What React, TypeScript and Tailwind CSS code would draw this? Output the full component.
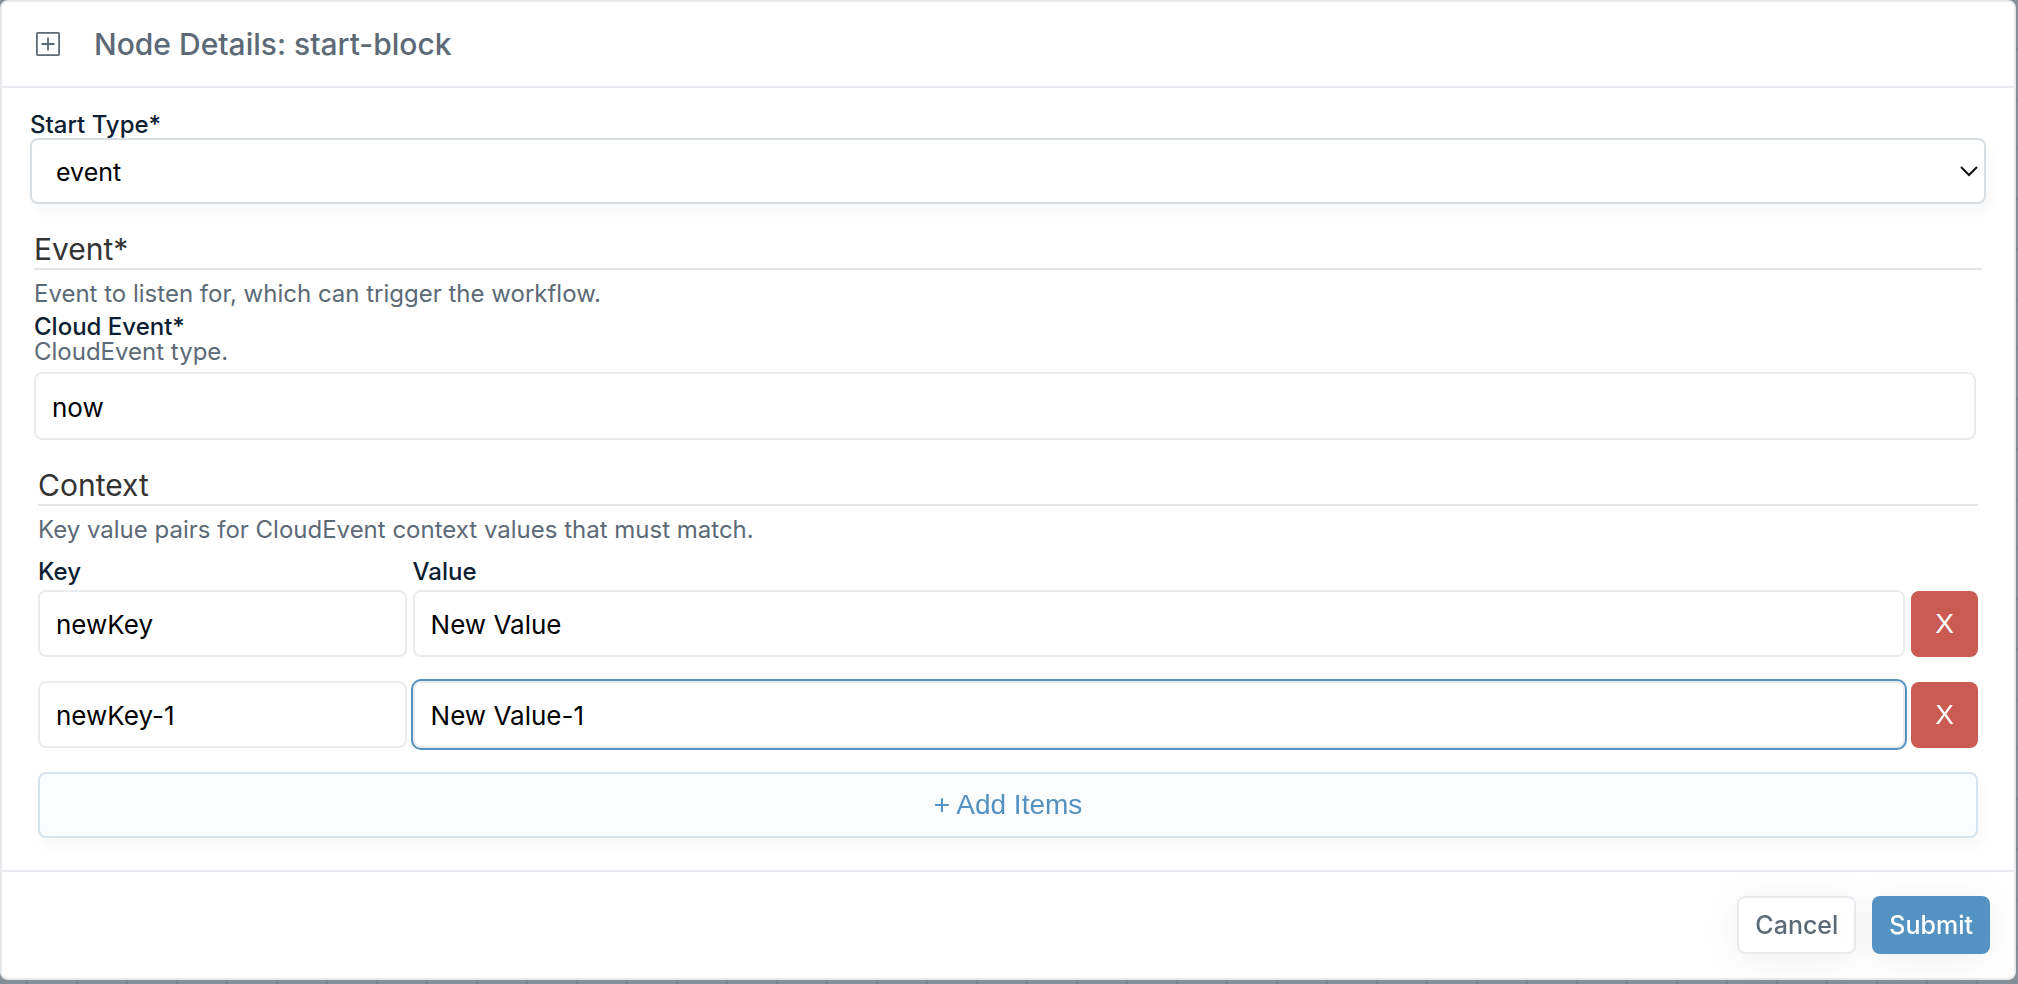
import { useState } from "react";

type Pair = { id: number; key: string; value: string };

const field =
  "w-full min-w-0 rounded-lg border-2 border-[#e9ebef] bg-white px-4 pt-[2px] text-[26px] text-black outline-none focus:outline-2 focus:outline-solid focus:outline-[#5492c1]";

function PlusSquareIcon() {
  return (
    <svg className="size-6" viewBox="0 0 24 24" fill="none" stroke="#5c6977" strokeWidth="1.8" aria-hidden="true">
      <rect x="0.9" y="0.9" width="22.2" height="22.2" rx="0.8" />
      <path d="M12 5.5v13M5.5 12h13" />
    </svg>
  );
}

function SectionTitle({ children }: { children: string }) {
  return (
    <h2 className="mt-[26px] border-b-2 border-[#e4e5e6] text-3xl leading-[38px] font-normal text-[#333333]">
      {children}
    </h2>
  );
}

export default function App() {
  const [startType, setStartType] = useState("event");
  const [cloudEvent, setCloudEvent] = useState("now");
  const [pairs, setPairs] = useState<Pair[]>([
    { id: 0, key: "newKey", value: "New Value" },
    { id: 1, key: "newKey-1", value: "New Value-1" },
  ]);

  const update = (id: number, patch: Partial<Pair>) =>
    setPairs(pairs.map((p) => (p.id === id ? { ...p, ...patch } : p)));
  const remove = (id: number) => setPairs(pairs.filter((p) => p.id !== id));
  const add = () => {
    const id = pairs.reduce((max, p) => Math.max(max, p.id), -1) + 1;
    setPairs([...pairs, { id, key: `newKey-${id}`, value: `New Value-${id}` }]);
  };

  return (
    <div className="min-h-screen bg-[#858f98] bg-[linear-gradient(to_right,#7a868f_2px,transparent_2px),linear-gradient(to_bottom,#7a868f_2px,transparent_2px)] bg-[length:50px_50px] bg-[position:26px_48px] pr-[2px] pb-1 font-['Inter',sans-serif]">
      <form
        className="rounded-lg border-2 border-[#e6eaed] bg-white"
        onSubmit={(e) => e.preventDefault()}
      >
        <header className="flex items-center gap-[34px] border-b-2 border-[#e9ebf0] px-[34px] py-6">
          <PlusSquareIcon />
          <h1 className="text-3xl leading-9 font-medium text-[#5c6977]">Node Details: start-block</h1>
        </header>

        <main className="px-7 pt-6 pb-8">
          <label htmlFor="start-type" className="block text-2xl leading-[26px] font-medium text-[#0b2033]">
            Start Type*
          </label>
          <div className="relative">
            <select
              id="start-type"
              value={startType}
              onChange={(e) => setStartType(e.target.value)}
              className="block h-[66px] w-full appearance-none rounded-lg border-2 border-[#d7dde1] bg-white px-6 pt-1 text-[25px] text-black shadow-[4px_8px_12px_rgba(0,0,0,0.03)] outline-none"
            >
              <option value="default">default</option>
              <option value="event">event</option>
              <option value="scheduled">scheduled</option>
            </select>
            <svg
              className="pointer-events-none absolute top-7 right-2 h-[11px] w-[18px]"
              viewBox="0 0 18 11"
              fill="none"
              stroke="#111"
              strokeWidth="2"
              aria-hidden="true"
            >
              <path d="M1 1l8 8 8-8" />
            </svg>
          </div>

          <section className="px-1">
            <SectionTitle>Event*</SectionTitle>
            <p className="mt-2 text-2xl leading-8 text-[#5c6977]">
              Event to listen for, which can trigger the workflow.
            </p>
            <label htmlFor="cloud-event" className="mt-1 block text-2xl leading-[26px] font-medium text-[#0b2033]">
              Cloud Event*
            </label>
            <p className="text-2xl leading-6 text-[#5c6977]">CloudEvent type.</p>
            <div className="mt-2 flex pr-[6px]">
              <input
                id="cloud-event"
                value={cloudEvent}
                onChange={(e) => setCloudEvent(e.target.value)}
                className={`${field} h-[68px]`}
              />
            </div>

            <div className="px-1">
              <SectionTitle>Context</SectionTitle>
              <p className="mt-2 text-2xl leading-8 text-[#5c6977]">
                Key value pairs for CloudEvent context values that must match.
              </p>
              <div className="mt-[10px] grid grid-cols-[19%_1fr_67px] gap-x-[6px] text-2xl leading-8 font-medium text-[#0b2033]">
                <span id="key-label">Key</span>
                <span id="value-label">Value</span>
              </div>
              <div className="mt-[2px] flex flex-col gap-6">
                {pairs.map((p) => (
                  <div key={p.id} className="grid grid-cols-[19%_1fr_67px] items-end gap-x-[6px]">
                    <input
                      aria-labelledby="key-label"
                      value={p.key}
                      onChange={(e) => update(p.id, { key: e.target.value })}
                      className={`${field} h-[67px]`}
                    />
                    <input
                      aria-labelledby="value-label"
                      autoFocus={p.id === 1}
                      value={p.value}
                      onChange={(e) => update(p.id, { value: e.target.value })}
                      className={`${field} h-[67px] caret-transparent`}
                    />
                    <button
                      type="button"
                      onClick={() => remove(p.id)}
                      className="h-[66px] rounded-lg bg-[#c95b53] text-[28px] text-white font-['Liberation_Sans',sans-serif]"
                    >
                      X
                    </button>
                  </div>
                ))}
              </div>
              <button
                type="button"
                onClick={add}
                className="mt-6 block h-[66px] w-full rounded-lg border-2 border-[#d6e4ef] bg-[#fafcfe] text-[28px] text-[#5492c1] shadow-[4px_8px_12px_rgba(0,0,0,0.03)] font-['Liberation_Sans',sans-serif]"
              >
                + Add Items
              </button>
            </div>
          </section>
        </main>

        <footer className="flex justify-end gap-4 border-t-2 border-[#e9ebf0] p-6">
          <button
            type="button"
            className="h-[58px] rounded-lg border-2 border-[#e9ebef] bg-white px-4 pt-[2px] text-[25px] font-medium text-[#5c6977] shadow-[0_4px_36px_rgba(0,0,0,0.07)]"
          >
            Cancel
          </button>
          <button
            type="submit"
            className="h-[58px] rounded-lg bg-[#5492c1] px-[17px] pt-[2px] text-[25px] font-medium text-white shadow-[0_4px_36px_rgba(0,0,0,0.07)]"
          >
            Submit
          </button>
        </footer>
      </form>
    </div>
  );
}
